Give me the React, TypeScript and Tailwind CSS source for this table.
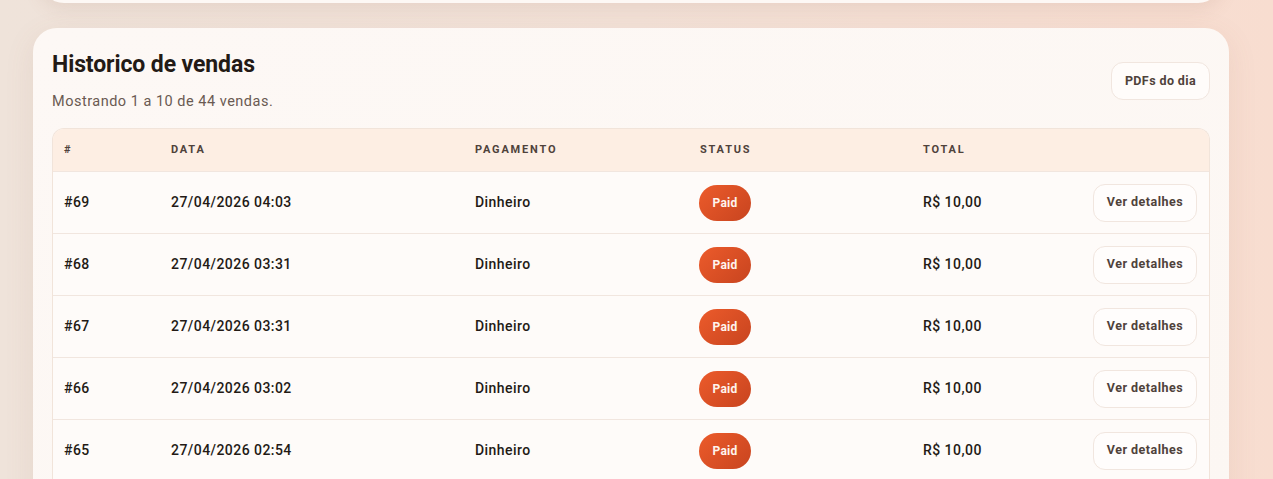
import React from "react";

const rows = [
  { id: "#69", date: "27/04/2026 04:03" },
  { id: "#68", date: "27/04/2026 03:31" },
  { id: "#67", date: "27/04/2026 03:31" },
  { id: "#66", date: "27/04/2026 03:02" },
  { id: "#65", date: "27/04/2026 02:54" },
];

const cols = "grid grid-cols-[107px_304px_225px_223px_1fr_auto] items-center";

export default function App() {
  return (
    <div
      className="h-[479px] w-full overflow-hidden bg-[linear-gradient(90deg,#efe3da_0%,#f3e2d8_50%,#f8ddd0_100%)] pl-[33px] pt-0"
      style={{ fontFamily: "Roboto, 'Noto Sans', sans-serif" }}
    >
      <div className="w-[1196px]">
        <div className="mx-[7px] -mt-[57px] h-[60px] rounded-b-[24px] rounded-t-none bg-[#fdf8f5] shadow-[0_6px_18px_rgba(150,100,80,0.12)]" />
        <div className="mt-[25px] h-[480px] rounded-t-[24px] bg-[linear-gradient(160deg,#fdf8f5_0%,#fcf7f3_100%)] px-[19px] pt-[22px] shadow-[0_8px_30px_rgba(150,100,80,0.10)]">
          <div className="flex items-start justify-between">
            <div>
              <h2 className="text-[23px] font-bold leading-[30px] tracking-[-0.1px] text-[#231a15]">
                Historico de vendas
              </h2>
              <p className="mt-[12px] text-[14.5px] leading-[20px] tracking-[0.5px] text-[#6a5a52]">
                Mostrando 1 a 10 de 44 vendas.
              </p>
            </div>
            <button className="mt-[12px] h-[38px] w-[99px] rounded-[12px] border border-[#f1e6df] bg-[#fffcfa] text-[12.5px] font-bold tracking-[0.4px] text-[#4f423b]">
              PDFs do dia
            </button>
          </div>
          <div className="mt-[16px] overflow-hidden rounded-t-[12px] border border-b-0 border-[#f1e4da]">
            <div className={`${cols} h-[42px] bg-[#fdeee3] text-[11px] font-bold tracking-[1.8px] text-[#4f423b]`}>
              <div className="pl-[11px]">#</div>
              <div className="pl-[11px]">DATA</div>
              <div className="pl-[11px]">PAGAMENTO</div>
              <div className="pl-[11px]">STATUS</div>
              <div className="pl-[11px]">TOTAL</div>
              <div />
            </div>
            {rows.map((r) => (
              <div
                key={r.id}
                className={`${cols} h-[62px] border-t border-[#f1e6df] bg-[#fefbf9] text-[14px] font-medium tracking-[0.45px] text-[#231a15]`}
              >
                <div className="pl-[11px]">{r.id}</div>
                <div className="pl-[11px]">{r.date}</div>
                <div className="pl-[11px]">Dinheiro</div>
                <div className="pl-[10px]">
                  <span className="inline-flex h-[36px] w-[52px] items-center justify-center rounded-full bg-[linear-gradient(135deg,#ec5b2b_0%,#c8441f_100%)] text-[12px] font-bold tracking-[0.2px] text-[#fff4ee]">
                    Paid
                  </span>
                </div>
                <div className="pl-[11px]">R$ 10,00</div>
                <div className="pr-[12px]">
                  <button className="h-[38px] w-[104px] rounded-[12px] border border-[#f1e6df] bg-[#fffdfc] text-[12.5px] font-bold tracking-[0.5px] text-[#4f423b]">
                    Ver detalhes
                  </button>
                </div>
              </div>
            ))}
          </div>
        </div>
      </div>
    </div>
  );
}
